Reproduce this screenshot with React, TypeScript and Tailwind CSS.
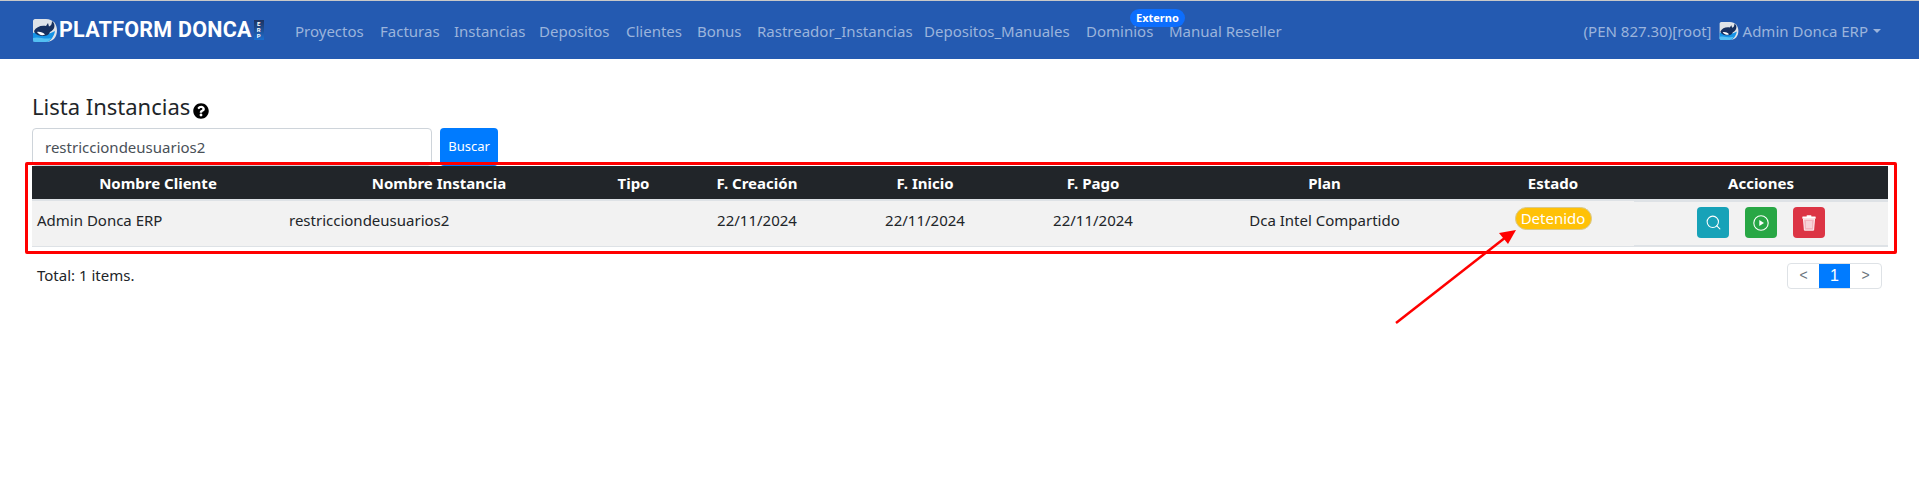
import { FaQuestionCircle } from "react-icons/fa";
import { Search } from "lucide-react";

const navLinks = [
  { label: "Proyectos", width: "w-[85px]" },
  { label: "Facturas", width: "w-[74px]" },
  { label: "Instancias", width: "w-[85px]" },
  { label: "Depositos", width: "w-[87px]" },
  { label: "Clientes", width: "w-[71px]" },
  { label: "Bonus", width: "w-[60px]" },
  { label: "Rastreador_Instancias", width: "w-[167px]" },
  { label: "Depositos_Manuales", width: "w-[162px]" },
  { label: "Dominios", width: "w-[83px]" },
  { label: "Manual Reseller", width: "w-[127px]" },
];

function Logo({ size }: { size: string }) {
  return (
    <svg viewBox="0 0 24 23" className={size}>
      <path d="M2 0H13C20 0 24 5 24 11.5C24 18 20 23 13 23H2C1 23 0 22 0 21V2C0 1 1 0 2 0Z" fill="#dfe3e8" />
      <path d="M0 14C6 12 12 18 22 12C21 18 17 23 13 23H2C1 23 0 22 0 21Z" fill="#1593e6" />
      <path d="M0 19C6 17 11 21 18 19C16 22 14 23 13 23H2C1 23 0 22 0 21Z" fill="#53bff2" />
      <path d="M1 12C3 8 8 6 13 7L15 4L16 7.5C18 7 19 5 19 2C23 5 22 11 17 13C16 16 13 17 10 17C7 17 2 16 1 12Z" fill="#17305f" />
      <path d="M4 13C7 12.5 10 13.5 12 15.5C9 17 6 16 4 13Z" fill="#ffffff" />
    </svg>
  );
}

function Navbar() {
  return (
    <nav className="flex h-[59px] items-center border-t border-t-[#c8c8c8] bg-[#245ab1] pl-[33px] pr-[38px]">
      <a href="#" className="flex w-[254px] items-center">
        <Logo size="h-[23px] w-[24px]" />
        <span className="ml-[2px] font-['Roboto'] text-[21.5px] font-bold leading-none tracking-[0.25px] text-white">
          PLATFORM DONCA
        </span>
        <span className="ml-[2px] flex h-[20px] w-[10px] flex-col items-center justify-center bg-gradient-to-b from-[#1b3260] to-[#1a6fd0] font-['Roboto'] text-[6px] font-bold leading-[6px] text-white">
          <span>E</span>
          <span>R</span>
          <span>P</span>
        </span>
      </a>
      <ul className="ml-[8px] flex items-center pt-[2px] text-[#9bb4dc]">
        {navLinks.map((link) => (
          <li key={link.label} className={`${link.width} relative whitespace-nowrap`}>
            {link.label}
            {link.label === "Dominios" && (
              <span className="absolute left-[44px] top-[-11px] rounded-full bg-[#0d6efd] px-[6px] text-[11px] font-bold leading-[18px] text-white">
                Externo
              </span>
            )}
          </li>
        ))}
      </ul>
      <div className="ml-auto flex items-center pt-[2px] text-[#9bb4dc]">
        <span>(PEN 827.30)[root]</span>
        <Logo size="ml-[7px] h-[18px] w-[20px]" />
        <span className="ml-[4px]">Admin Donca ERP</span>
        <span className="ml-[5px] h-0 w-0 border-x-[4px] border-t-[4px] border-x-transparent border-t-[#9bb4dc]" />
      </div>
    </nav>
  );
}

function ActionButton({ color, children }: { color: string; children: React.ReactNode }) {
  return (
    <button className={`${color} flex h-[31px] w-[32px] items-center justify-center rounded-[4px] text-white`}>
      {children}
    </button>
  );
}

export default function App() {
  return (
    <div className="min-h-[481px] bg-white font-['Noto_Sans',sans-serif] text-[15px] text-[#212529]">
      <Navbar />
      <main className="relative px-[32px]">
        <div className="flex h-[69px] items-end pb-[7px]">
          <h1 className="text-[22px] leading-[30px]">Lista Instancias</h1>
          <FaQuestionCircle className="mb-[2px] ml-[3px] h-[16px] w-[16px] text-black" />
        </div>
        <form className="flex h-[38px] gap-[8px]">
          <input
            defaultValue="restricciondeusuarios2"
            className="h-[38px] w-[400px] rounded-[4px] border border-[#ced4da] px-[12px] text-[#495057]"
          />
          <button type="button" className="h-[38px] w-[58px] rounded-[4px] bg-[#007bff] text-[13px] text-white">
            Buscar
          </button>
        </form>
        <table className="w-[1856px] table-fixed border-collapse">
          <thead className="bg-[#212529] text-white">
            <tr className="h-[34px] [&>th]:pt-[2px]">
              <th className="w-[252px]">Nombre Cliente</th>
              <th className="w-[310px]">Nombre Instancia</th>
              <th className="w-[79px]">Tipo</th>
              <th className="w-[168px]">F. Creación</th>
              <th className="w-[168px]">F. Inicio</th>
              <th className="w-[168px]">F. Pago</th>
              <th className="w-[295px]">Plan</th>
              <th className="w-[162px]">Estado</th>
              <th className="w-[254px]">Acciones</th>
            </tr>
          </thead>
          <tbody>
            <tr className="h-[46px] border-t-2 border-b border-[#dee2e6] bg-[#f2f2f2] align-top">
              <td className="px-[5px] pt-[8px]">Admin Donca ERP</td>
              <td className="px-[5px] pt-[8px]">restricciondeusuarios2</td>
              <td />
              <td className="pt-[8px] text-center">22/11/2024</td>
              <td className="pt-[8px] text-center">22/11/2024</td>
              <td className="pt-[8px] text-center">22/11/2024</td>
              <td className="pt-[8px] text-center">Dca Intel Compartido</td>
              <td className="pt-[6px]">
                <span className="mx-auto block h-[23px] w-[77px] rounded-full border border-[#d8c98e] bg-[#ffc107] text-center leading-[21px] text-white">
                  Detenido
                </span>
              </td>
              <td className="border-b-white pt-[6px] shadow-[inset_0_1px_0_#dee2e6,inset_0_-1px_0_#dee2e6]">
                <div className="flex justify-center gap-[16px]">
                  <ActionButton color="bg-[#17a2b8]"><Search size={17} strokeWidth={1.5} /></ActionButton>
                  <ActionButton color="bg-[#28a745]">
                    <svg viewBox="0 0 16 16" className="h-[16px] w-[16px]">
                      <circle cx="8" cy="8" r="7.2" fill="none" stroke="currentColor" strokeWidth="1.1" />
                      <polygon points="6.3,5 11,8 6.3,11" fill="currentColor" />
                    </svg>
                  </ActionButton>
                  <ActionButton color="bg-[#dc3545]">
                    <svg viewBox="0 0 14 16" className="h-[16px] w-[14px]">
                      <path d="M1.5 4H12.5L11.6 15.2H2.4Z" fill="#f2b6bf" stroke="#fff" strokeWidth="0.9" />
                      <rect x="0.3" y="1.6" width="13.4" height="2.2" rx="0.5" fill="#fff" />
                      <rect x="4.6" y="0.2" width="4.8" height="1.8" rx="0.5" fill="#fff" />
                      <path d="M5 6V13M7 6V13M9 6V13" stroke="#fff" strokeWidth="0.8" />
                    </svg>
                  </ActionButton>
                </div>
              </td>
            </tr>
          </tbody>
        </table>
        <div className="mt-[16px] flex items-center justify-between pl-[5px] pr-[5px]">
          <span>Total: 1 items.</span>
          <div className="flex h-[26px] w-[95px] overflow-hidden rounded-[4px] border border-[#dee2e6] font-['Liberation_Sans',sans-serif] text-[14px]">
            <span className="flex flex-1 items-center justify-center text-[#6c757d]">&lt;</span>
            <span className="flex w-[31px] items-center justify-center bg-[#007bff] text-[16px] text-white">1</span>
            <span className="flex flex-1 items-center justify-center text-[#6c757d]">&gt;</span>
          </div>
        </div>
        <div className="pointer-events-none absolute left-[25px] top-[103px] h-[92px] w-[1872px] rounded-[2px] border-[3px] border-[#ff0000]" />
      </main>
      <svg className="pointer-events-none absolute left-0 top-0" width="1919" height="481">
        <line x1="1396" y1="323" x2="1506" y2="237" stroke="#ff0000" strokeWidth="2.5" />
        <polygon points="1516,230 1508,244 1499,233" fill="#ff0000" />
      </svg>
    </div>
  );
}
